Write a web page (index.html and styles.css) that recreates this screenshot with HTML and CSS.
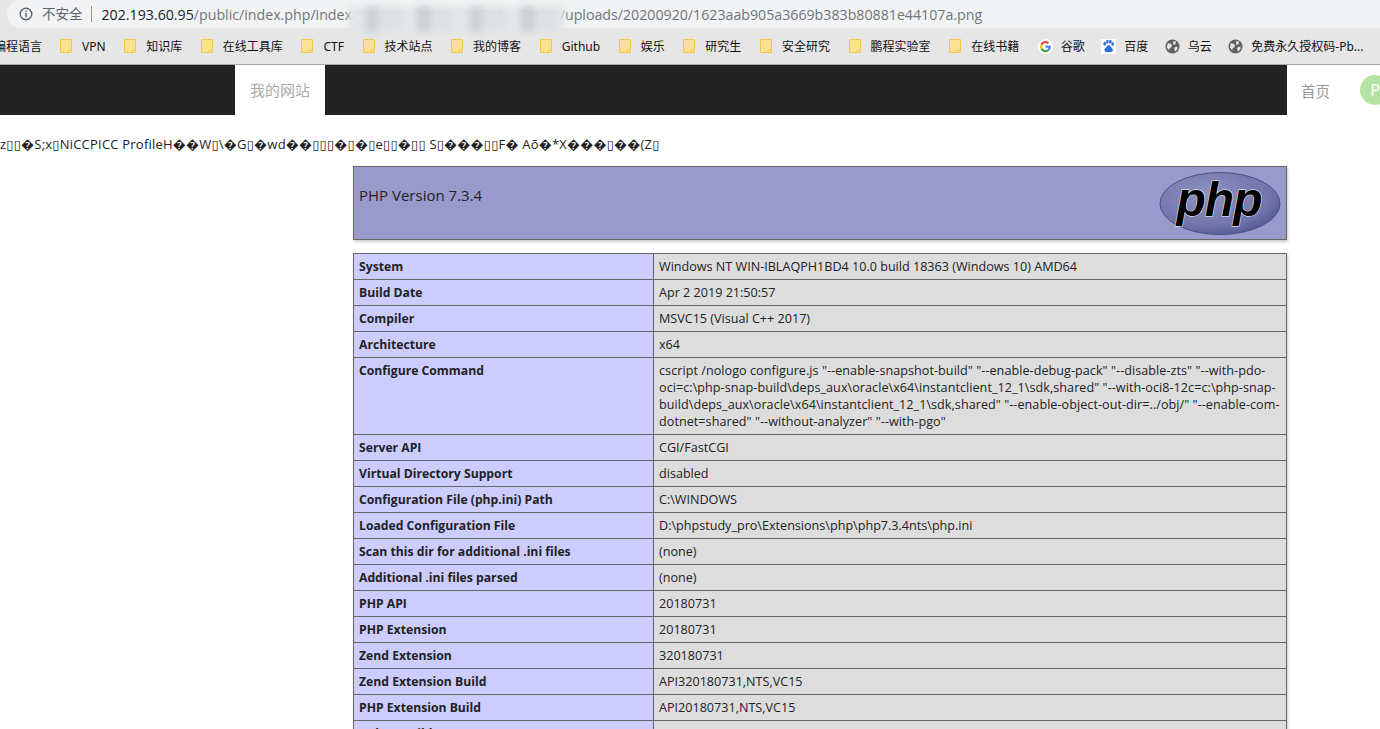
FILE: index.html
```html
<!DOCTYPE html>
<html lang="zh-CN">
  <head>
    <meta charset="UTF-8" />
    <title>phpinfo</title>
    <link rel="stylesheet" href="styles.css">
  </head>
  <body>
    <!-- browser chrome -->
    <div class="addressbar">
      <div class="omnibox">
        <svg class="info-icon" width="14" height="14" viewBox="0 0 14 14">
          <circle cx="7" cy="7" r="5.8" fill="none" stroke="#5f6368" stroke-width="1.4" />
          <rect x="6.3" y="6" width="1.4" height="4.2" fill="#5f6368" />
          <rect x="6.3" y="3.6" width="1.4" height="1.4" fill="#5f6368" />
        </svg>
        <span class="insecure">不安全</span>
        <span class="url"><b>202.193.60.95</b>/public/index.php/index/index/index/index/index/index/uploads/20200920/1623aab905a3669b383b80881e44107a.png</span>
      </div>
      <div class="smudge"></div>
    </div>

    <div class="bookmarks">
      <span class="bookmark first">编程语言</span>
      <span class="bookmark"><svg class="folder" viewBox="0 0 12 14"><path d="M.5.5h11v13H.5z" fill="#fde293" stroke="#f2c94c" /><path d="M8 13.5v-2.5h3.5" fill="none" stroke="#f2c94c" /></svg>VPN</span>
      <span class="bookmark"><svg class="folder" viewBox="0 0 12 14"><path d="M.5.5h11v13H.5z" fill="#fde293" stroke="#f2c94c" /><path d="M8 13.5v-2.5h3.5" fill="none" stroke="#f2c94c" /></svg>知识库</span>
      <span class="bookmark"><svg class="folder" viewBox="0 0 12 14"><path d="M.5.5h11v13H.5z" fill="#fde293" stroke="#f2c94c" /><path d="M8 13.5v-2.5h3.5" fill="none" stroke="#f2c94c" /></svg>在线工具库</span>
      <span class="bookmark"><svg class="folder" viewBox="0 0 12 14"><path d="M.5.5h11v13H.5z" fill="#fde293" stroke="#f2c94c" /><path d="M8 13.5v-2.5h3.5" fill="none" stroke="#f2c94c" /></svg>CTF</span>
      <span class="bookmark"><svg class="folder" viewBox="0 0 12 14"><path d="M.5.5h11v13H.5z" fill="#fde293" stroke="#f2c94c" /><path d="M8 13.5v-2.5h3.5" fill="none" stroke="#f2c94c" /></svg>技术站点</span>
      <span class="bookmark"><svg class="folder" viewBox="0 0 12 14"><path d="M.5.5h11v13H.5z" fill="#fde293" stroke="#f2c94c" /><path d="M8 13.5v-2.5h3.5" fill="none" stroke="#f2c94c" /></svg>我的博客</span>
      <span class="bookmark"><svg class="folder" viewBox="0 0 12 14"><path d="M.5.5h11v13H.5z" fill="#fde293" stroke="#f2c94c" /><path d="M8 13.5v-2.5h3.5" fill="none" stroke="#f2c94c" /></svg>Github</span>
      <span class="bookmark"><svg class="folder" viewBox="0 0 12 14"><path d="M.5.5h11v13H.5z" fill="#fde293" stroke="#f2c94c" /><path d="M8 13.5v-2.5h3.5" fill="none" stroke="#f2c94c" /></svg>娱乐</span>
      <span class="bookmark"><svg class="folder" viewBox="0 0 12 14"><path d="M.5.5h11v13H.5z" fill="#fde293" stroke="#f2c94c" /><path d="M8 13.5v-2.5h3.5" fill="none" stroke="#f2c94c" /></svg>研究生</span>
      <span class="bookmark"><svg class="folder" viewBox="0 0 12 14"><path d="M.5.5h11v13H.5z" fill="#fde293" stroke="#f2c94c" /><path d="M8 13.5v-2.5h3.5" fill="none" stroke="#f2c94c" /></svg>安全研究</span>
      <span class="bookmark"><svg class="folder" viewBox="0 0 12 14"><path d="M.5.5h11v13H.5z" fill="#fde293" stroke="#f2c94c" /><path d="M8 13.5v-2.5h3.5" fill="none" stroke="#f2c94c" /></svg>鹏程实验室</span>
      <span class="bookmark"><svg class="folder" viewBox="0 0 12 14"><path d="M.5.5h11v13H.5z" fill="#fde293" stroke="#f2c94c" /><path d="M8 13.5v-2.5h3.5" fill="none" stroke="#f2c94c" /></svg>在线书籍</span>
      <span class="bookmark site"><svg class="favicon" viewBox="0 0 16 16"><circle cx="8" cy="8" r="8" fill="#fff" /><path d="M13.6 8.2c0-.5 0-.9-.1-1.3H8v2.4h3.2c-.2.8-.6 1.400-1.200 1.800l1.900 1.500c1.100-1 1.700-2.500 1.700-4.400z" fill="#4285f4" /><path d="M8 14c1.600 0 2.900-.5 3.900-1.400L10 11.100c-.5.400-1.200.6-2 .6-1.500 0-2.800-1-3.300-2.400L2.800 10.800C3.800 12.700 5.700 14 8 14z" fill="#34a853" /><path d="M4.700 9.300c-.3-.8-.3-1.800 0-2.600L2.800 5.200c-.8 1.600-.8 4 0 5.600z" fill="#fbbc05" /><path d="M8 4.300c.9 0 1.600.3 2.200.9l1.700-1.700C10.900 2.600 9.600 2 8 2 5.700 2 3.800 3.300 2.800 5.200l1.900 1.500C5.200 5.300 6.500 4.300 8 4.300z" fill="#ea4335" /></svg>谷歌</span>
      <span class="bookmark site"><svg class="favicon" viewBox="0 0 16 16"><rect width="16" height="16" fill="#fff" /><g fill="#2f6fe0"><ellipse cx="4" cy="5" rx="1.500" ry="2" /><ellipse cx="6.800" cy="2.800" rx="1.400" ry="2" /><ellipse cx="10" cy="2.800" rx="1.400" ry="2" /><ellipse cx="12.400" cy="5.200" rx="1.400" ry="2" /><path d="M8.300 6.500c-1.500 0-2 1.700-3.200 2.700-1.300 1-1.600 2.200-1.100 3.500.6 1.500 2.300 1.500 4.300 1.200 2 .3 3.700.3 4.200-1.300.4-1.300 0-2.500-1.200-3.400-1-.9-1.500-2.700-3-2.700z" /></g></svg>百度</span>
      <span class="bookmark site"><svg class="favicon" viewBox="0 0 16 16"><circle cx="8" cy="8" r="7.500" fill="#5f6368" /><path d="M3 4.500l3 .5 1.500 2-1 2-1.500.5-.5 2.500L2 9zM9 2l3 1-1 2.500-2.500.5zM10 9l3-1 .5 2-2.500 3.500-1-2z" fill="#e6e6e6" /></svg>乌云</span>
      <span class="bookmark site"><svg class="favicon" viewBox="0 0 16 16"><circle cx="8" cy="8" r="7.500" fill="#5f6368" /><path d="M3 4.500l3 .5 1.500 2-1 2-1.500.5-.5 2.500L2 9zM9 2l3 1-1 2.500-2.500.5zM10 9l3-1 .5 2-2.500 3.500-1-2z" fill="#e6e6e6" /></svg>免费永久授权码-Pb...</span>
    </div>

    <!-- site nav -->
    <nav class="navbar">
      <a class="brand">我的网站</a>
      <div class="nav-right">
        <a class="nav-link">首页</a>
        <span class="avatar">P</span>
      </div>
    </nav>

    <p class="garbage">z▯▯�S;x▯NiCCPICC ProfileH��W▯\�G▯�wd��▯▯▯�▯�▯e▯▯�▯▯ S▯���▯▯F� Aō�*X���▯��(Z▯</p>

    <!-- phpinfo -->
    <div class="center">
      <table class="info">
        <tr class="h">
          <td>
            <svg class="php-logo" width="122" height="64" viewBox="0 0 122 64">
              <defs>
                <radialGradient id="logo-fill" cx="0.4" cy="0.35" r="0.75">
                  <stop offset="0" stop-color="#8f92c2" />
                  <stop offset="0.7" stop-color="#6f74ab" />
                  <stop offset="1" stop-color="#4c5089" />
                </radialGradient>
              </defs>
              <ellipse cx="61" cy="32.500" rx="60" ry="31" fill="url(#logo-fill)" stroke="#4c5089" />
              <text class="php-logo-text" x="60" y="45">php</text>
            </svg>
            <h1>PHP Version 7.3.4</h1>
          </td>
        </tr>
      </table>
      <table class="info">
        <tr><td class="e">System</td><td class="v">Windows NT WIN-IBLAQPH1BD4 10.0 build 18363 (Windows 10) AMD64</td></tr>
        <tr><td class="e">Build Date</td><td class="v">Apr 2 2019 21:50:57</td></tr>
        <tr><td class="e">Compiler</td><td class="v">MSVC15 (Visual C++ 2017)</td></tr>
        <tr><td class="e">Architecture</td><td class="v">x64</td></tr>
        <tr><td class="e">Configure Command</td><td class="v command">cscript /nologo configure.js "--enable-snapshot-build" "--enable-debug-pack" "--disable-zts" "--with-pdo-oci=c:\php-snap-build\deps_aux\oracle\x64\instantclient_12_1\sdk,shared" "--with-oci8-12c=c:\php-snap-build\deps_aux\oracle\x64\instantclient_12_1\sdk,shared" "--enable-object-out-dir=../obj/" "--enable-com-dotnet=shared" "--without-analyzer" "--with-pgo"</td></tr>
        <tr><td class="e">Server API</td><td class="v">CGI/FastCGI</td></tr>
        <tr><td class="e">Virtual Directory Support</td><td class="v">disabled</td></tr>
        <tr><td class="e">Configuration File (php.ini) Path</td><td class="v">C:\WINDOWS</td></tr>
        <tr><td class="e">Loaded Configuration File</td><td class="v">D:\phpstudy_pro\Extensions\php\php7.3.4nts\php.ini</td></tr>
        <tr><td class="e">Scan this dir for additional .ini files</td><td class="v">(none)</td></tr>
        <tr><td class="e">Additional .ini files parsed</td><td class="v">(none)</td></tr>
        <tr><td class="e">PHP API</td><td class="v">20180731</td></tr>
        <tr><td class="e">PHP Extension</td><td class="v">20180731</td></tr>
        <tr><td class="e">Zend Extension</td><td class="v">320180731</td></tr>
        <tr><td class="e">Zend Extension Build</td><td class="v">API320180731,NTS,VC15</td></tr>
        <tr><td class="e">PHP Extension Build</td><td class="v">API20180731,NTS,VC15</td></tr>
        <tr><td class="e">Debug Build</td><td class="v">no</td></tr>
      </table>
    </div>
  </body>
</html>
```

FILE: styles.css
```css
html, body {
  margin: 0;
  height: 729px;
  overflow: hidden;
}
body {
  font-family: "Open Sans", "Noto Sans CJK SC", sans-serif;
  color: #222;
  background: #fff;
}

/* browser chrome */
.addressbar {
  height: 28px;
  background: #e6e6e6;
  padding-left: 7px;
  position: relative;
}
.omnibox {
  display: flex;
  align-items: center;
  height: 28px;
  padding-left: 12px;
  border-radius: 14px 0 0 14px;
  background: #f1f3f4;
  white-space: nowrap;
  overflow: hidden;
}
.info-icon {
  flex: none;
}
.insecure {
  margin-left: 9px;
  padding-right: 8px;
  border-right: 1px solid #9a9a9a;
  font-size: 13.500px;
  line-height: 16px;
  color: #5f6368;
}
.url {
  margin-left: 10px;
  font-size: 14.200px;
  color: #70757a;
}
.url b {
  font-weight: 400;
  color: #202124;
}
.smudge {
  position: absolute;
  left: 349px;
  top: 6px;
  width: 216px;
  height: 26px;
  background: repeating-linear-gradient(90deg, #e3e6e8 0 16px, #ced2d5 16px 30px, #dfe2e3 30px 52px);
  filter: blur(3px);
}
.bookmarks {
  display: flex;
  align-items: center;
  height: 36px;
  margin-left: -6px;
  background: #e6e6e6;
  border-bottom: 1px solid #a8a8a8;
  font-family: "Noto Sans", "Noto Sans CJK SC", sans-serif;
  font-size: 12px;
  color: #111;
  white-space: nowrap;
}
.bookmark {
  display: flex;
  align-items: center;
  margin-right: 18.600px;
}
.first {
  margin-right: 18px;
}
.site {
  margin-right: 16.500px;
}
.folder {
  width: 12px;
  height: 14px;
  margin-right: 10px;
}
.favicon {
  width: 15px;
  height: 15px;
  margin-right: 8px;
}

/* site nav */
.navbar {
  display: flex;
  justify-content: space-between;
  height: 50px;
  padding-left: 235px;
  background: #222;
}
.brand {
  width: 90px;
  background: #fff;
  color: #aaa;
  font-size: 15px;
  line-height: 50px;
  text-align: center;
}
.nav-right {
  display: flex;
  align-items: center;
  width: 93px;
  padding-left: 14px;
  box-sizing: border-box;
  background: #fff;
  overflow: hidden;
}
.nav-link {
  flex: none;
  color: #999;
  font-size: 14.500px;
}
.avatar {
  flex: none;
  width: 30px;
  height: 30px;
  margin-left: 30px;
  border-radius: 50%;
  background: #b5e3a1;
  color: #fff;
  font-size: 16px;
  line-height: 30px;
  text-align: center;
}

.garbage {
  margin: 21px 0 13px;
  font-size: 13px;
  line-height: 17px;
  letter-spacing: .22px;
  white-space: nowrap;
  font-family: "Open Sans", "DejaVu Sans", sans-serif;
  color: #222;
}

/* phpinfo */
.center {
  width: 934px;
  margin-left: 353px;
  font-size: 12.600px;
  line-height: 17px;
}
.info {
  width: 934px;
  margin-bottom: 13px;
  border-collapse: collapse;
  table-layout: fixed;
  box-shadow: 1px 2px 3px #ccc;
}
.info td {
  padding: 4px 5px;
  border: 1px solid #666;
  vertical-align: top;
  overflow-wrap: anywhere;
}
.h td {
  background: #99c;
}
.h h1 {
  margin: 14px 0 0;
  font-size: 15px;
  font-weight: 400;
  line-height: 20px;
}
.php-logo {
  display: block;
  float: right;
}
.php-logo-text {
  font-family: "Liberation Sans", sans-serif;
  font-size: 48px;
  font-weight: 700;
  font-style: italic;
  text-anchor: middle;
  letter-spacing: -1px;
  fill: #000;
  stroke: #fff;
  stroke-width: 1px;
  paint-order: stroke;
}
.e {
  width: 289px;
  background: #ccf;
  font-size: 12.200px;
  font-weight: 700;
}
.v {
  background: #ddd;
}
.command {
  letter-spacing: .05px;
}
```
